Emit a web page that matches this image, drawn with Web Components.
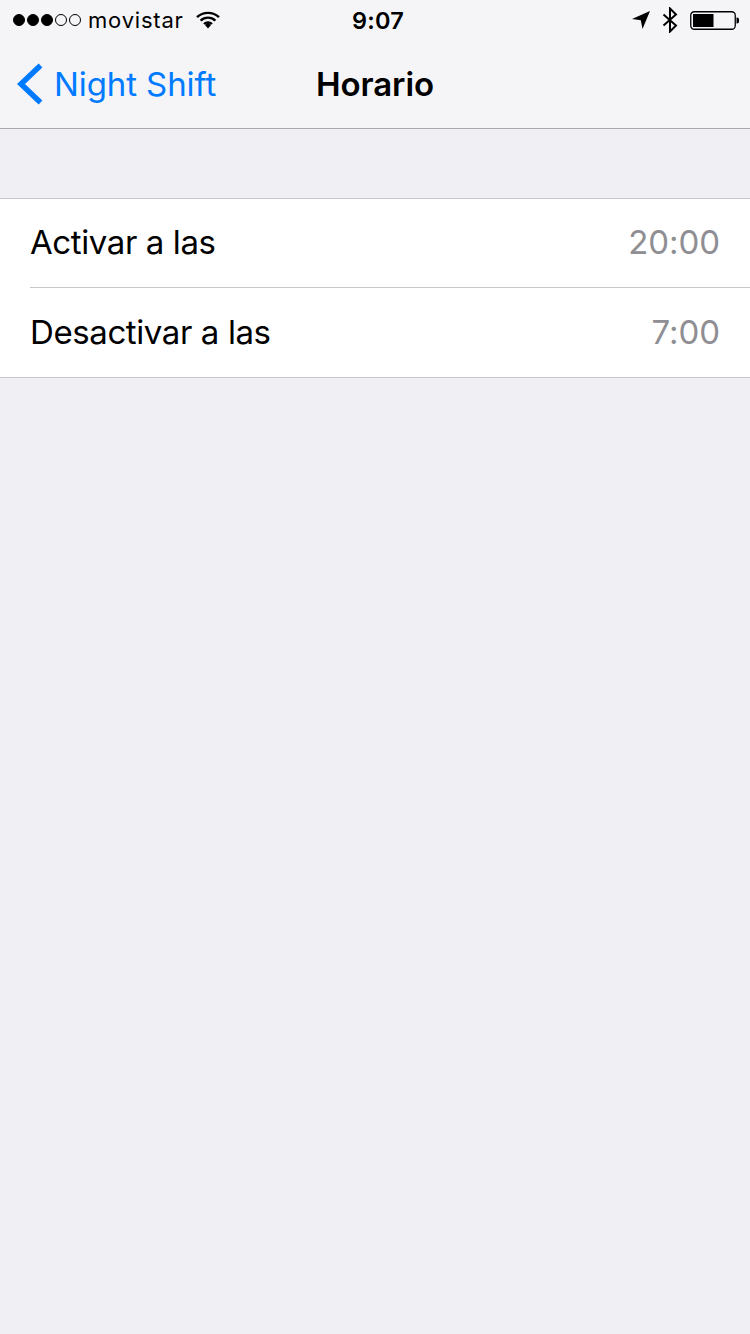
<!DOCTYPE html>
<html><head><meta charset="utf-8"><style>
html,body{margin:0;padding:0;background:#efeff4;height:1334px;overflow:hidden;font-family:Inter,"Liberation Sans",sans-serif}
</style></head><body>
<ios-navbar back="Night Shift" title="Horario"></ios-navbar>
<ios-group>
<ios-row label="Activar a las" value="20:00"></ios-row>
<ios-row label="Desactivar a las" value="7:00" last></ios-row>
</ios-group>
<script>
customElements.define('ios-statusbar',class extends HTMLElement{constructor(){super();this.attachShadow({mode:'open'}).innerHTML=`<style>
:host{display:grid;grid-template-columns:1fr auto 1fr;align-items:center;height:40px;font-family:Inter,"Liberation Sans",sans-serif;color:#000}
.l{display:flex;align-items:center;padding-left:13px}
.sig{display:flex;gap:2px;margin-right:7px}
.sig i{width:12px;height:12px;box-sizing:border-box;border-radius:50%;background:#000;border:1px solid #000}
.sig i.o{background:none}
.c{font-size:23.5px;font-weight:600;letter-spacing:.2px;margin-left:6px}
.car{font-size:22px;letter-spacing:.8px;margin-right:12px}
.r{display:flex;align-items:center;justify-content:flex-end;padding-right:11px}
svg{display:block}
</style>
<div class="l"><span class="sig"><i></i><i></i><i></i><i class="o"></i><i class="o"></i></span><span class="car">movistar</span>
<svg width="24" height="18" viewBox="0 0 24 18"><path d="M1 6.200C7 .4 17 .4 23 6.200M4.600 9.600C8.800 5.600 15.200 5.600 19.400 9.600M8 13C10.300 10.800 13.700 10.800 16 13" fill="none" stroke="#000" stroke-width="2.400"/><path d="M9 14L12 10.800 15 14 12 17.400Z" fill="#000"/></svg></div>
<div class="c">9:07</div>
<div class="r">
<svg width="18" height="18" viewBox="0 0 18 18" style="margin-right:12px"><path d="M18 0L10.500 18 8.800 9.200 0 8Z" fill="#000"/></svg>
<svg width="16" height="26" viewBox="0 0 16 26" style="margin-right:12px"><path d="M1.500 7.500L14 18.500 8 24.500V1.500L14 7.500 1.500 18.500" fill="none" stroke="#000" stroke-width="2"/></svg>
<svg width="49" height="19" viewBox="0 0 49 19"><rect x=".75" y=".75" width="44.500" height="17.500" rx="3.500" fill="none" stroke="#000" stroke-width="1.300"/><rect x="3" y="3" width="20.500" height="13" fill="#000"/><path d="M46.500 6.500c1.200 0 2.500.7 2.500 1.500v3c0 .8-1.300 1.500-2.500 1.500Z" fill="#000"/></svg>
</div>`}});
customElements.define('ios-navbar',class extends HTMLElement{constructor(){super();this.attachShadow({mode:'open'}).innerHTML=`<style>
:host{display:block;height:128px;background:#f5f5f8;border-bottom:1px solid #a9a9ad;font-family:Inter,"Liberation Sans",sans-serif}
.bar{display:grid;grid-template-columns:1fr auto 1fr;align-items:center;height:88px}
.back{display:flex;align-items:center;color:#007aff;font-size:33px;padding-left:17px;gap:11px;letter-spacing:-.1px}
.t{font-size:33px;font-weight:600;color:#000;letter-spacing:-.1px}
svg{display:block}
</style><ios-statusbar></ios-statusbar><div class="bar"><div class="back"><svg width="26" height="42" viewBox="0 0 26 42"><path d="M23.500 2.500L4 21 23.500 39.500" fill="none" stroke="#007aff" stroke-width="5.500"/></svg><span>${this.getAttribute('back')}</span></div><div class="t">${this.getAttribute('title')}</div><div></div></div>`}});
customElements.define('ios-group',class extends HTMLElement{constructor(){super();this.attachShadow({mode:'open'}).innerHTML=`<style>
:host{display:block;margin-top:69px;background:#fff;border-top:1px solid #c8c7cc;border-bottom:1px solid #c8c7cc}
</style><slot></slot>`}});
customElements.define('ios-row',class extends HTMLElement{constructor(){super();const last=this.hasAttribute('last');this.attachShadow({mode:'open'}).innerHTML=`<style>
:host{display:block;padding-left:30px;font-family:Inter,"Liberation Sans",sans-serif}
.r{display:flex;justify-content:space-between;align-items:center;height:${last?89:88}px;padding-right:30px;font-size:33px;${last?'':'border-bottom:1px solid #c8c7cc;'}}
.l{color:#000;letter-spacing:-.4px;padding-bottom:2px}.v{color:#8e8e93;letter-spacing:-.05px;padding-bottom:2px}
</style><div class="r"><span class="l">${this.getAttribute('label')}</span><span class="v">${this.getAttribute('value')}</span></div>`}});
</script></body></html>
